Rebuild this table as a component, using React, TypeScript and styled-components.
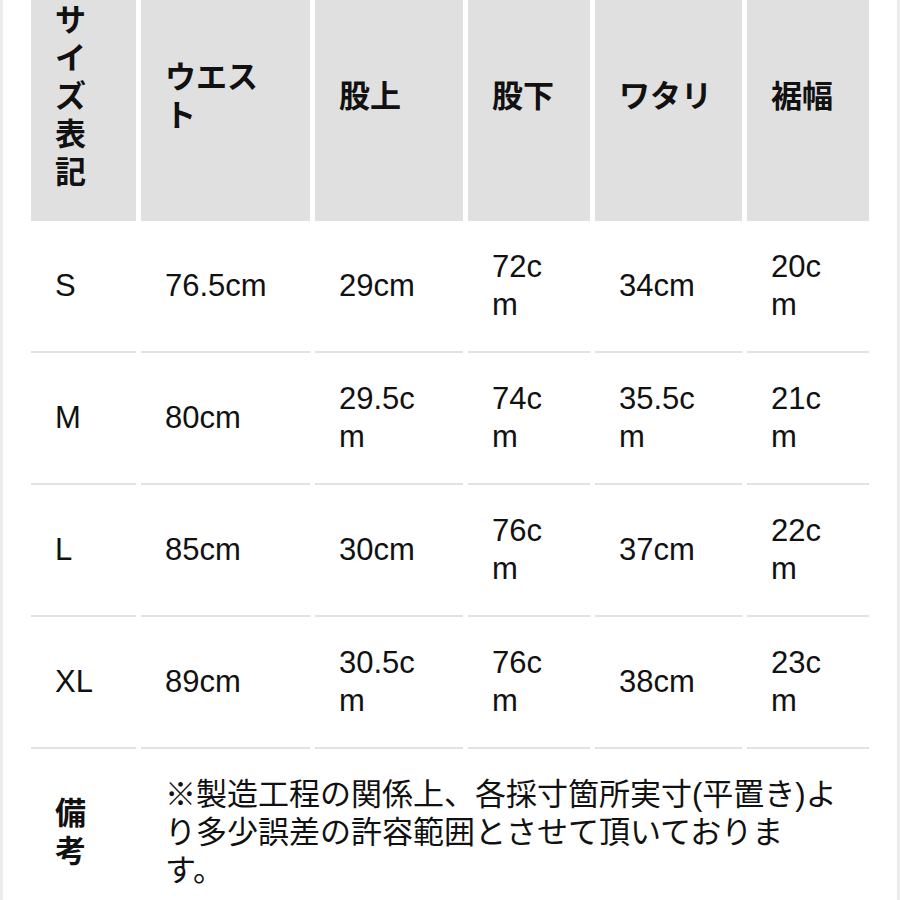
import React from 'react'
import styled, { createGlobalStyle } from 'styled-components'

const GlobalStyle = createGlobalStyle`
  * {
    box-sizing: border-box;
  }
  body {
    margin: 0;
    background: #ffffff;
    font-family: 'Liberation Sans', 'Noto Sans CJK JP', sans-serif;
    color: #111111;
    overflow: hidden;
  }
`

const Frame = styled.div`
  width: 900px;
  height: 900px;
  overflow: hidden;
  border-left: 3px solid #ececec;
  border-right: 3px solid #ececec;
  padding-left: 28px;
`

const Grid = styled.div`
  display: grid;
  grid-template-columns: 105px 169px 148px 122px 147px 122px;
  column-gap: 5px;
  margin-top: -25px;
  font-size: 31px;
  line-height: 38px;
`

const Cell = styled.div<{ $head?: boolean; $span?: number; $bold?: boolean }>`
  display: flex;
  align-items: center;
  padding: 27px ${(p) => (p.$span ? '30px' : '24px')} 27px 24px;
  background: ${(p) => (p.$head ? '#e0e0e0' : 'transparent')};
  border-bottom: 2px solid ${(p) => (p.$head ? '#e0e0e0' : '#e2e2e2')};
  font-weight: ${(p) => (p.$head || p.$bold ? 700 : 400)};
  word-break: ${(p) => (p.$span ? 'normal' : 'break-all')};
  grid-column: ${(p) => (p.$span ? `span ${p.$span}` : 'auto')};
`

const headers = ['サイズ表記', 'ウエスト', '股上', '股下', 'ワタリ', '裾幅']

const rows = [
  ['S', '76.5cm', '29cm', '72cm', '34cm', '20cm'],
  ['M', '80cm', '29.5cm', '74cm', '35.5cm', '21cm'],
  ['L', '85cm', '30cm', '76cm', '37cm', '22cm'],
  ['XL', '89cm', '30.5cm', '76cm', '38cm', '23cm']
]

export default function App() {
  return (
    <>
      <GlobalStyle />
      <Frame>
        <Grid>
          {headers.map((h) => (
            <Cell key={h} $head>
              {h}
            </Cell>
          ))}
          {rows.map((r) =>
            r.map((v, i) => <Cell key={r[0] + i}>{v}</Cell>)
          )}
          <Cell $bold>備考</Cell>
          <Cell $span={5}>
            ※製造工程の関係上、各採寸箇所実寸(平置き)より多少誤差の許容範囲とさせて頂いております。
          </Cell>
        </Grid>
      </Frame>
    </>
  )
}
